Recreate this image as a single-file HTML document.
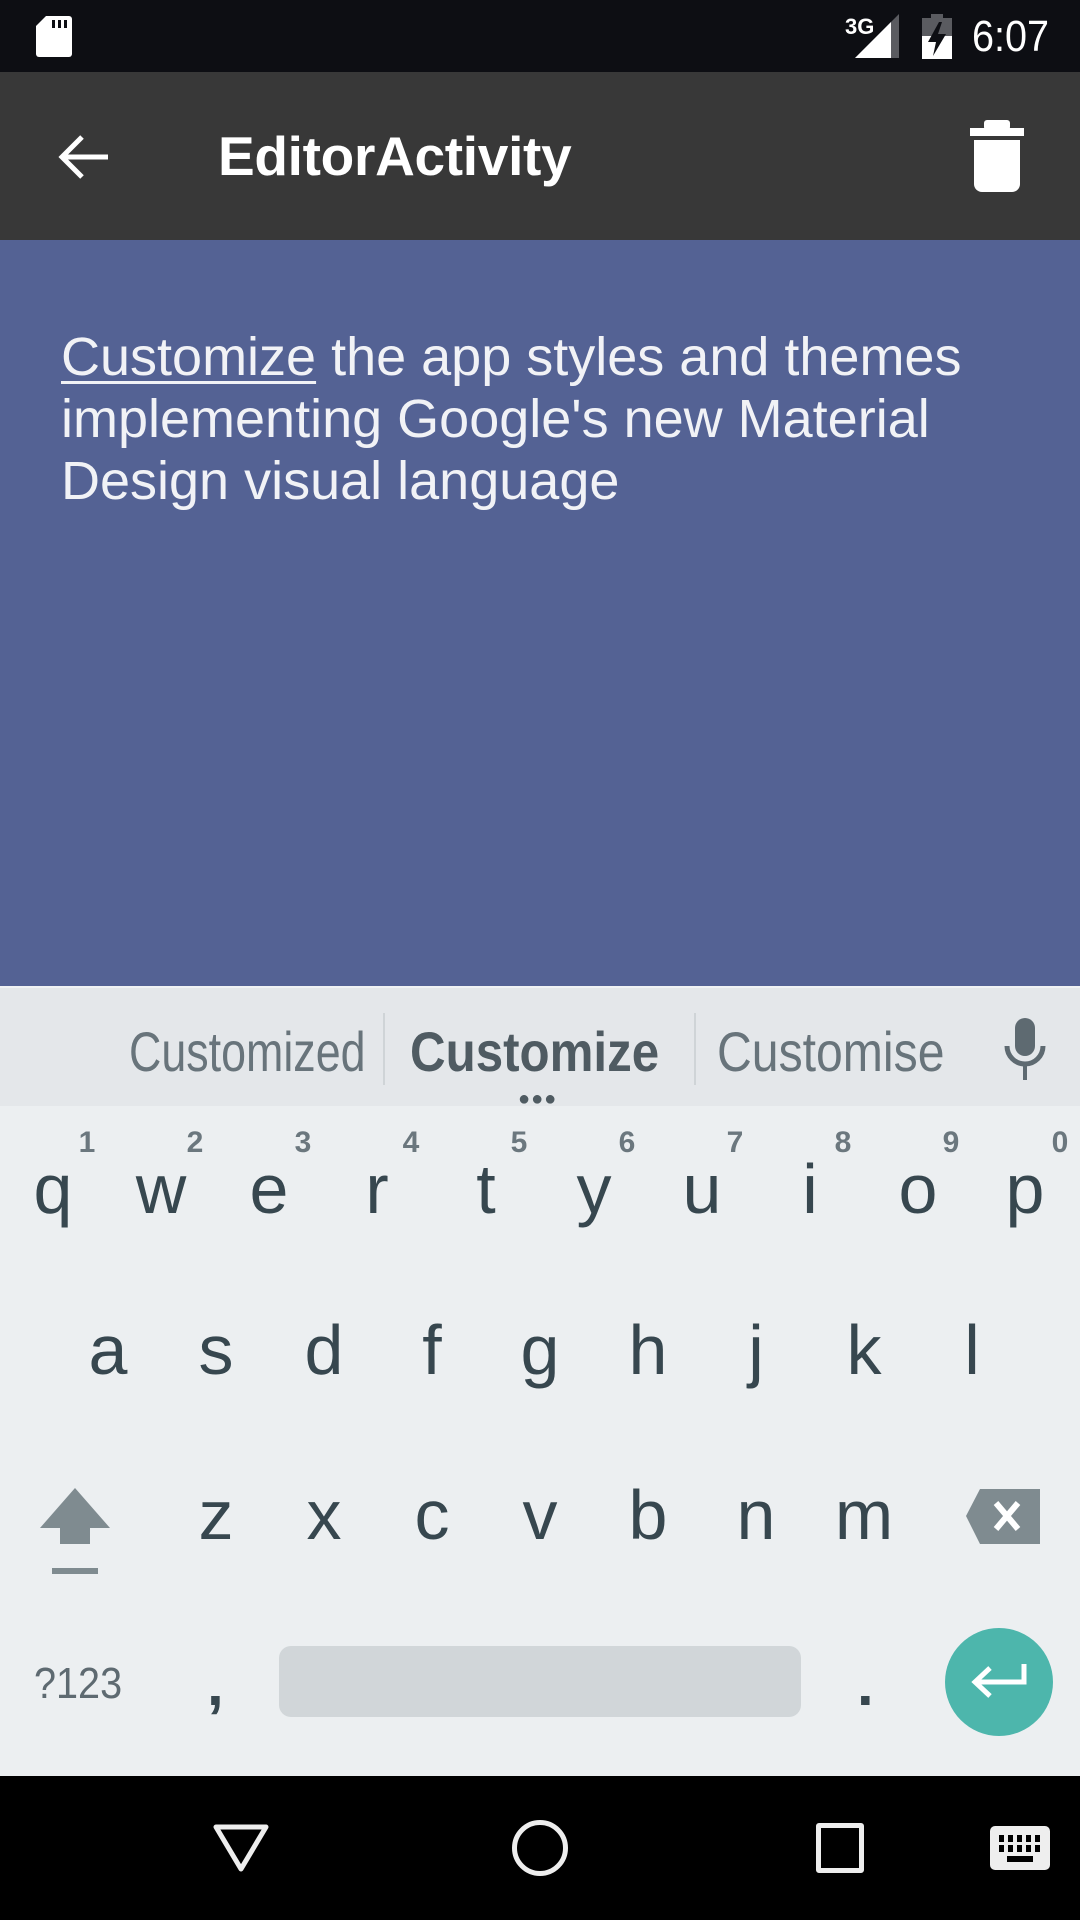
<!DOCTYPE html>
<html><head><meta charset="utf-8"><style>
*{margin:0;padding:0;box-sizing:border-box}
body{width:1080px;height:1920px;overflow:hidden;font-family:"Liberation Sans",sans-serif;background:#eceff1;position:relative}
.abs{position:absolute}
.k{position:absolute;width:108px;text-align:center;font-size:70px;color:#37474f;line-height:1}
.d{position:absolute;width:40px;text-align:center;font-size:30px;color:#6b777e;font-weight:bold;line-height:1}
.s{position:absolute;font-size:56px;line-height:1;color:#68747b;transform-origin:left center;white-space:nowrap}
</style></head><body>
<div class="abs" style="left:0;top:0;width:1080px;height:72px;background:#0d0e13"></div>
<svg class="abs" style="left:36px;top:16px" width="36" height="41" viewBox="0 0 36 41"><path d="M10 0H33a3 3 0 0 1 3 3V38a3 3 0 0 1-3 3H3a3 3 0 0 1-3-3V10Z" fill="#fff"/><rect x="16" y="4" width="3" height="8" fill="#0d0e13"/><rect x="22" y="4" width="3" height="8" fill="#0d0e13"/><rect x="28" y="4" width="3" height="8" fill="#0d0e13"/></svg>
<div class="abs" style="left:845px;top:14px;font-size:22px;color:#fff;font-weight:bold">3G</div>
<svg class="abs" style="left:855px;top:14px" width="44" height="44"><polygon points="44,0 44,44 0,44" fill="#5a5b60"/><polygon points="36,8 36,44 0,44" fill="#fff"/></svg>
<svg class="abs" style="left:922px;top:14px" width="30" height="45"><rect x="9" y="0" width="12" height="5" fill="#5a5b60"/><rect x="0" y="4" width="30" height="41" fill="#5a5b60"/><rect x="0" y="22" width="30" height="23" fill="#fff"/><polygon points="17,8 6,28 14,28 11,42 24,20 16,20 20,8" fill="#0d0e13"/></svg>
<div class="abs" style="left:972px;top:12px;font-size:44px;color:#fff;transform:scaleX(.9);transform-origin:left">6:07</div>
<div class="abs" style="left:0;top:72px;width:1080px;height:168px;background:#383838"></div>
<svg class="abs" style="left:58px;top:134px" width="52" height="46" viewBox="0 0 52 46"><path d="M50 23H6M24 3L4 23L24 43" stroke="#fff" stroke-width="5" fill="none"/></svg>
<div class="abs" style="left:218px;top:124px;font-size:55px;color:#fff;font-weight:bold;letter-spacing:-0.3px">EditorActivity</div>
<svg class="abs" style="left:970px;top:120px" width="54" height="72"><rect x="0" y="8" width="54" height="8" fill="#fff"/><rect x="14" y="0" width="26" height="10" rx="3" fill="#fff"/><path d="M4 20H50V64a8 8 0 0 1-8 8H12a8 8 0 0 1-8-8Z" fill="#fff"/></svg>
<div class="abs" style="left:0;top:240px;width:1080px;height:746px;background:#546294"></div>
<div class="abs" style="left:61px;top:326px;width:940px;font-size:54px;line-height:62px;color:#f1f2f6"><span style="text-decoration:underline;text-underline-offset:6px;text-decoration-thickness:3px">Customize</span> the app styles and themes implementing Google's new Material Design visual language</div>
<div class="abs" style="left:0;top:986px;width:1080px;height:120px;background:#e4e7ea;border-top:2px solid #f0f2f4"></div>
<div class="s" style="left:129px;top:1024px;transform:scaleX(.8)">Customized</div>
<div class="abs" style="left:383px;top:1013px;width:2px;height:72px;background:#cfd4d7"></div>
<div class="s" style="left:410px;top:1024px;font-weight:bold;color:#4f5b62;transform:scaleX(.88)">Customize</div>
<div class="abs" style="left:694px;top:1013px;width:2px;height:72px;background:#cfd4d7"></div>
<div class="s" style="left:717px;top:1024px;transform:scaleX(.86)">Customise</div>
<div class="abs" style="left:518px;top:1089px;font-size:20px;letter-spacing:1px;color:#4f5b62;line-height:1">●●●</div>
<svg class="abs" style="left:1003px;top:1018px" width="44" height="64"><rect x="12" y="0" width="20" height="38" rx="10" fill="#5e6a71"/><path d="M4 28a18 18 0 0 0 36 0" stroke="#5e6a71" stroke-width="5" fill="none"/><rect x="20" y="46" width="4" height="16" fill="#5e6a71"/></svg>
<div class="abs" style="left:0;top:1106px;width:1080px;height:670px;background:#eceff1"></div>
<div class="d" style="left:67px;top:1128px">1</div><div class="d" style="left:175px;top:1128px">2</div><div class="d" style="left:283px;top:1128px">3</div><div class="d" style="left:391px;top:1128px">4</div><div class="d" style="left:499px;top:1128px">5</div><div class="d" style="left:607px;top:1128px">6</div><div class="d" style="left:715px;top:1128px">7</div><div class="d" style="left:823px;top:1128px">8</div><div class="d" style="left:931px;top:1128px">9</div><div class="d" style="left:1040px;top:1128px">0</div>
<div class="k" style="left:-1px;top:1154px">q</div><div class="k" style="left:107px;top:1154px">w</div><div class="k" style="left:215px;top:1154px">e</div><div class="k" style="left:323px;top:1154px">r</div><div class="k" style="left:432px;top:1154px">t</div><div class="k" style="left:540px;top:1154px">y</div><div class="k" style="left:648px;top:1154px">u</div><div class="k" style="left:756px;top:1154px">i</div><div class="k" style="left:864px;top:1154px">o</div><div class="k" style="left:971px;top:1154px">p</div>
<div class="k" style="left:54px;top:1315px">a</div><div class="k" style="left:162px;top:1315px">s</div><div class="k" style="left:270px;top:1315px">d</div><div class="k" style="left:378px;top:1315px">f</div><div class="k" style="left:486px;top:1315px">g</div><div class="k" style="left:594px;top:1315px">h</div><div class="k" style="left:702px;top:1315px">j</div><div class="k" style="left:810px;top:1315px">k</div><div class="k" style="left:918px;top:1315px">l</div>
<div class="k" style="left:162px;top:1480px">z</div><div class="k" style="left:270px;top:1480px">x</div><div class="k" style="left:378px;top:1480px">c</div><div class="k" style="left:486px;top:1480px">v</div><div class="k" style="left:594px;top:1480px">b</div><div class="k" style="left:702px;top:1480px">n</div><div class="k" style="left:810px;top:1480px">m</div>
<svg class="abs" style="left:38px;top:1488px" width="74" height="86"><polygon points="37,0 72,40 52,40 52,56 22,56 22,40 2,40" fill="#7f8b90"/><rect x="14" y="80" width="46" height="6" fill="#7f8b90"/></svg>
<svg class="abs" style="left:966px;top:1489px" width="76" height="55"><path d="M14 0H74V55H14L0 27Z" fill="#7f8b90"/><path d="M30 14L52 40M52 14L30 40" stroke="#fff" stroke-width="6"/></svg>
<div class="abs" style="left:34px;top:1659px;font-size:44px;color:#5e6a71;transform:scaleX(.9);transform-origin:left">?123</div>
<div class="abs" style="left:207px;top:1650px;font-size:60px;color:#37474f;font-weight:bold">,</div>
<div class="abs" style="left:279px;top:1646px;width:522px;height:71px;background:#d1d6d9;border-radius:12px"></div>
<div class="abs" style="left:857px;top:1650px;font-size:60px;color:#37474f;font-weight:bold">.</div>
<div class="abs" style="left:945px;top:1628px;width:108px;height:108px;border-radius:50%;background:#4db6ac"></div>
<svg class="abs" style="left:970px;top:1664px" width="58" height="36"><path d="M54 0V18H6M20 4L5 18L20 32" stroke="#fff" stroke-width="5" fill="none"/></svg>
<div class="abs" style="left:0;top:1776px;width:1080px;height:144px;background:#000"></div>
<svg class="abs" style="left:212px;top:1823px" width="58" height="50"><polygon points="4,4 54,4 29,46" fill="none" stroke="#eee" stroke-width="5" stroke-linejoin="round"/></svg>
<div class="abs" style="left:512px;top:1820px;width:56px;height:56px;border-radius:50%;border:5px solid #eee"></div>
<div class="abs" style="left:816px;top:1823px;width:48px;height:50px;border:5px solid #eee;border-radius:3px"></div>
<svg class="abs" style="left:990px;top:1826px" width="60" height="44"><rect width="60" height="44" rx="5" fill="#eee"/><g fill="#000"><rect x="9" y="9" width="5" height="7"/><rect x="18" y="9" width="5" height="7"/><rect x="27" y="9" width="5" height="7"/><rect x="36" y="9" width="5" height="7"/><rect x="45" y="9" width="5" height="7"/><rect x="9" y="19" width="5" height="7"/><rect x="18" y="19" width="5" height="7"/><rect x="27" y="19" width="5" height="7"/><rect x="36" y="19" width="5" height="7"/><rect x="45" y="19" width="5" height="7"/><rect x="17" y="30" width="26" height="6"/></g></svg>
</body></html>
